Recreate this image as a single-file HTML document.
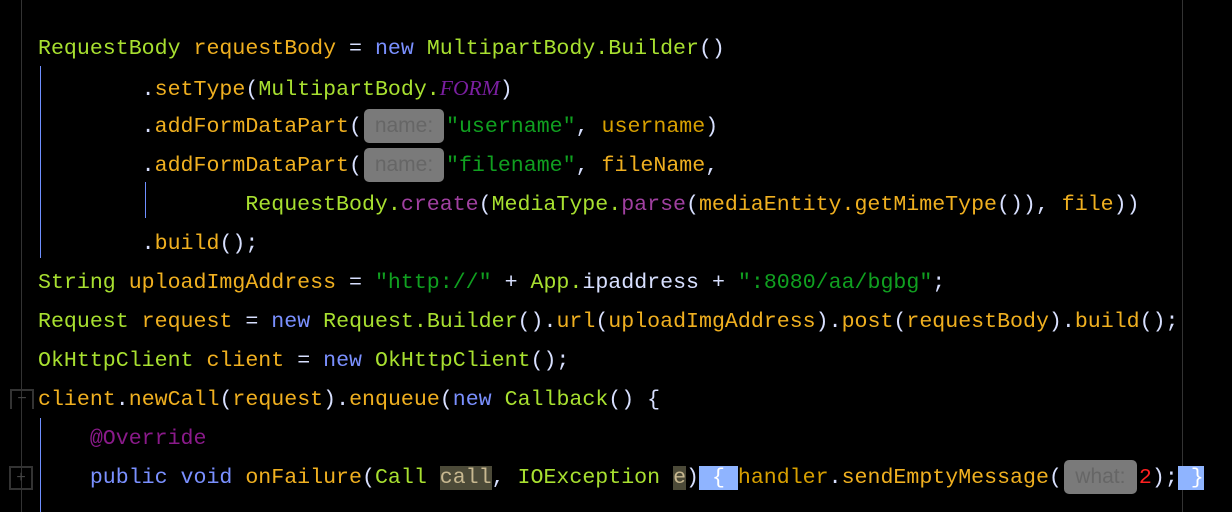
<!DOCTYPE html><html><head><meta charset="utf-8"><style>
body{margin:0;width:1232px;height:512px;background:#000;overflow:hidden;position:relative;font-family:"Liberation Mono",monospace;font-size:21.6px;}
.l{position:absolute;left:38px;height:39px;line-height:39px;white-space:pre;color:#f0b020}
.t{color:#a8e030}.k{color:#7a90ff}.s{color:#10a020}.p{color:#d8e0ff}.m{color:#d8a000}.pu{color:#a040a0}.n{color:#ff2020}
.f{color:#7a1fa0;font-style:italic;font-family:"Liberation Serif",serif}
.h{display:inline-block;background:#7a7a7a;color:#666;border-radius:5px;height:34px;line-height:34px;vertical-align:middle;font-family:"Liberation Sans",sans-serif;font-size:21px;text-align:center;margin:0 2px}
.sel{background:#4c4a38}.b{background:#8fb4ff;color:#fff}
.v{position:absolute;width:1px}
</style></head><body>
<div class="v" style="left:21px;top:0;height:512px;background:#333"></div>
<div class="v" style="left:1182px;top:0;height:512px;background:#333"></div>
<div class="v" style="left:40px;top:66px;height:192px;background:#6f8fff"></div>
<div class="v" style="left:145px;top:182px;height:36px;background:#6f8fff"></div>
<div class="v" style="left:40px;top:418px;height:94px;background:#6f8fff"></div>
<div style="position:absolute;left:10px;top:389px;width:20px;height:18px;border:2px solid #333;border-bottom:none;color:#444;font:16px 'Liberation Sans';text-align:center;line-height:16px">−</div>
<div style="position:absolute;left:9px;top:466px;width:20px;height:20px;border:2px solid #333;color:#444;font:16px 'Liberation Sans';text-align:center;line-height:20px">+</div>
<div class="l" style="top:30px"><span class="t">RequestBody</span> requestBody <span class="p">=</span> <span class="k">new</span> <span class="t">MultipartBody.Builder</span><span class="p">()</span></div>
<div class="l" style="top:69px">        <span class="p">.</span>setType<span class="p">(</span><span class="t">MultipartBody.</span><span class="f">FORM</span><span class="p">)</span></div>
<div class="l" style="top:108px">        <span class="p">.</span>addFormDataPart<span class="p">(</span><span class="h" style="width:80px">name:</span><span class="s">"username"</span><span class="p">,</span> <span class="m">username</span><span class="p">)</span></div>
<div class="l" style="top:147px">        <span class="p">.</span>addFormDataPart<span class="p">(</span><span class="h" style="width:80px">name:</span><span class="s">"filename"</span><span class="p">,</span> fileName<span class="p">,</span></div>
<div class="l" style="top:186px">                <span class="t">RequestBody.</span><span class="pu">create</span><span class="p">(</span><span class="t">MediaType.</span><span class="pu">parse</span><span class="p">(</span>mediaEntity.getMimeType<span class="p">()),</span> file<span class="p">))</span></div>
<div class="l" style="top:225px">        <span class="p">.</span>build<span class="p">();</span></div>
<div class="l" style="top:264px"><span class="t">String</span> uploadImgAddress <span class="p">=</span> <span class="s">"http://"</span> <span class="p">+</span> <span class="t">App.</span><span class="p">ipaddress</span> <span class="p">+</span> <span class="s">":8080/aa/bgbg"</span><span class="p">;</span></div>
<div class="l" style="top:303px"><span class="t">Request</span> request <span class="p">=</span> <span class="k">new</span> <span class="t">Request.Builder</span><span class="p">().</span>url<span class="p">(</span>uploadImgAddress<span class="p">).</span>post<span class="p">(</span>requestBody<span class="p">).</span>build<span class="p">();</span></div>
<div class="l" style="top:342px"><span class="t">OkHttpClient</span> client <span class="p">=</span> <span class="k">new</span> <span class="t">OkHttpClient</span><span class="p">();</span></div>
<div class="l" style="top:381px">client<span class="p">.</span>newCall<span class="p">(</span>request<span class="p">).</span>enqueue<span class="p">(</span><span class="k">new</span> <span class="t">Callback</span><span class="p">()</span> <span class="p">{</span></div>
<div class="l" style="top:420px">    <span class="pu" style="color:#8a1a8a">@Override</span></div>
<div class="l" style="top:459px">    <span class="k">public void</span> onFailure<span class="p">(</span><span class="t">Call</span> <span class="sel" style="color:#c8b890">call</span><span class="p">,</span> <span class="t">IOException</span> <span class="sel" style="color:#c8b890">e</span><span class="p">)</span><span class="b"> { </span><span class="m">handler</span><span class="p">.</span>sendEmptyMessage<span class="p">(</span><span class="h" style="width:73px">what:</span><span class="n">2</span><span class="p">);</span><span class="b"> }</span></div>
</body></html>
